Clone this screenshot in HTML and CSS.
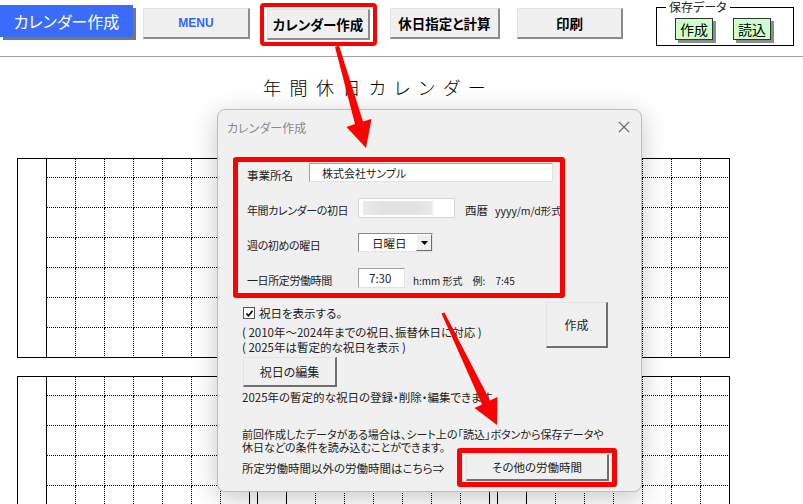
FILE: index.html
```html
<!DOCTYPE html>
<html lang="ja">
<head>
    <meta charset="UTF-8">
    <title>年間休日カレンダー</title>
    <link rel="stylesheet" href="styles.css">
</head>
<body>
    <header class="toolbar">
        <div class="brand">カレンダー作成</div>
        <button class="tool-btn menu">MENU</button>
        <div class="highlight"><button class="tool-btn">カレンダー作成</button></div>
        <button class="tool-btn wide">休日指定と計算</button>
        <button class="tool-btn print">印刷</button>
        <fieldset class="save-box">
            <legend>保存データ</legend>
            <button class="save-btn">作成</button>
            <button class="save-btn">読込</button>
        </fieldset>
    </header>

    <h1 class="sheet-title">年間休日カレンダー</h1>

    <div class="calendar" id="cal-top"></div>
    <div class="calendar next" id="cal-bottom"></div>

    <div class="dialog">
        <div class="dialog-title">
            <span>カレンダー作成</span>
            <svg class="close" width="12" height="12" viewBox="0 0 12 12"><path d="M1 1L11 11M11 1L1 11" stroke="#6b6b6b" stroke-width="1.1" fill="none"/></svg>
        </div>
        <div class="dialog-body">
            <div class="field-frame">
                <div class="field">
                    <span class="label short">事業所名</span>
                    <span class="textbox name">株式会社サンプル</span>
                </div>
                <div class="field">
                    <span class="label">年間カレンダーの初日</span>
                    <span class="textbox date"><span class="blur"></span></span>
                    <span class="hint-era">西暦</span>
                    <span class="hint">yyyy/m/d形式</span>
                </div>
                <div class="field">
                    <span class="label">週の初めの曜日</span>
                    <span class="combo">
                        <span class="combo-text">日曜日</span>
                        <span class="combo-drop"><svg width="7" height="4" viewBox="0 0 7 4"><path d="M0 0H7L3.5 4Z" fill="#000"/></svg></span>
                    </span>
                </div>
                <div class="field">
                    <span class="label">一日所定労働時間</span>
                    <span class="textbox time">7:30</span>
                    <span class="hint small">h:mm 形式　例:　7:45</span>
                </div>
            </div>

            <div class="options">
                <div class="option-col">
                    <div class="check-row">
                        <span class="check"><svg width="9" height="9" viewBox="0 0 9 9"><path d="M1.5 4.5L3.5 6.8L7.5 1.8" stroke="#000" stroke-width="1.6" fill="none"/></svg></span>
                        <span>祝日を表示する。</span>
                    </div>
                    <p class="note">( 2010年～2024年までの祝日、振替休日に対応 )<br>( 2025年は暫定的な祝日を表示 )</p>
                    <button class="dlg-btn edit">祝日の編集</button>
                    <p class="note after">2025年の暫定的な祝日の登録・削除・編集できます。</p>
                </div>
                <button class="dlg-btn create">作成</button>
            </div>

            <p class="notice">前回作成したデータがある場合は、シート上の「読込」ボタンから保存データや<br>休日などの条件を読み込むことができます。</p>

            <div class="other-row">
                <span class="other-text">所定労働時間以外の労働時間はこちら⇒</span>
                <div class="red-frame"><button class="dlg-btn other">その他の労働時間</button></div>
            </div>
        </div>
    </div>

    <svg class="arrows" width="803" height="504" viewBox="0 0 803 504">
        <polygon points="335,47 339,45.5 363,121.5 371.5,119 366,148 346.5,127 355,124" fill="#f00"/>
        <polygon points="441.5,313.5 444.5,312.5 490,400.5 497.5,397 497,425 474.5,408 482,404.5" fill="#f00"/>
    </svg>

    <script>
        // three months per row: label column + 7 day columns, header + 6 week rows
        function buildCalendar(el) {
            for (let m = 0; m < 3; m++) {
                const month = document.createElement('div');
                month.className = 'month';
                const label = document.createElement('div');
                label.className = 'month-label';
                month.appendChild(label);
                for (let r = 0; r < 7; r++) {
                    for (let c = 0; c < 7; c++) {
                        const cell = document.createElement('div');
                        cell.className = 'day';
                        if (c === 6) cell.classList.add('last-col');
                        if (r === 6) cell.classList.add('last-row');
                        month.appendChild(cell);
                    }
                }
                el.appendChild(month);
            }
        }
        buildCalendar(document.getElementById('cal-top'));
        buildCalendar(document.getElementById('cal-bottom'));
    </script>
</body>
</html>
```

FILE: styles.css
```css
* {
    box-sizing: border-box;
}

body {
    margin: 0;
    width: 803px;
    height: 504px;
    overflow: hidden;
    position: relative;
    background: #fff;
    font-family: 'Noto Sans CJK JP', 'Noto Sans', sans-serif;
    font-feature-settings: "palt";
    color: #000;
}

button {
    font-family: inherit;
    font-feature-settings: "palt";
    padding: 0;
    margin: 0;
    color: #000;
}

/* toolbar */
.toolbar {
    display: flex;
    align-items: flex-start;
    height: 57px;
    border-bottom: 1px solid #a0a0a0;
}

.brand {
    margin-top: 5px;
    width: 133px;
    height: 32px;
    line-height: 32px;
    background: #3b6cf9;
    color: #fff;
    font-size: 16px;
    text-align: center;
    box-shadow: 3px 3px 0 #777;
}

.tool-btn {
    width: 107px;
    height: 31px;
    margin: 8px 0 0 10px;
    background: #f0f0f0;
    border-style: solid;
    border-width: 1px 2px 2px 1px;
    border-color: #e2e2e2 #8c8c8c #8c8c8c #e2e2e2;
    font-size: 13.5px;
    font-weight: bold;
}

.tool-btn.menu {
    color: #3366ff;
    font-family: 'Liberation Sans', Arial, sans-serif;
    font-size: 12px;
}

.highlight {
    display: flex;
    margin: 3px 0 0 10px;
    padding: 2px 3px;
    border: 4px solid #f00;
    border-radius: 4px;
}

.highlight .tool-btn {
    width: 103px;
    margin: 0;
}

.tool-btn.wide {
    width: 110px;
    margin-left: 13px;
}

.tool-btn.print {
    width: 106px;
    margin-left: 17px;
}

.save-box {
    display: flex;
    gap: 20px;
    width: 138px;
    min-width: 0;
    margin: 1px 0 0 33px;
    padding: 5px 0 5px 18px;
    border: 1px solid #000;
}

.save-box legend {
    font-size: 12px;
    line-height: 12px;
    padding: 0 3px;
    margin-left: -9px;
    color: #222;
}

.save-btn {
    width: 38px;
    height: 22px;
    background: #ccffcc;
    border: 1px solid #333;
    box-shadow: 3px 3px 0 #8c8c8c;
    font-size: 14px;
}

/* sheet */
.sheet-title {
    margin: 20px 0 0 263px;
    height: 20px;
    font-size: 18px;
    line-height: 20px;
    font-weight: 300;
    letter-spacing: 8.5px;
}

.calendar {
    display: flex;
    gap: 7px;
    margin-top: 61px;
    padding-left: 17px;
}

.calendar.next {
    margin-top: 18px;
}

.month {
    display: grid;
    grid-template-columns: 29px repeat(7, 29px);
    grid-template-rows: 19px repeat(6, 30px);
    border-top: 1px solid #000;
    border-left: 1px solid #000;
}

.month-label {
    grid-row: 1 / span 7;
    border-right: 1px solid #000;
    border-bottom: 1px solid #000;
}

.day {
    border-right: 1px dotted #000;
    border-bottom: 1px dotted #000;
}

.day.last-col {
    border-right-style: solid;
}

.day.last-row {
    border-bottom-style: solid;
}

/* dialog */
.dialog {
    position: absolute;
    left: 217px;
    top: 109px;
    width: 425px;
    height: 383px;
    background: #f0f0f0;
    border: 1px solid #bdbdbd;
    border-radius: 8px;
    box-shadow: 0 6px 26px rgba(0, 0, 0, 0.22);
    font-size: 11px;
    color: #222;
}

.dialog-title {
    display: flex;
    justify-content: space-between;
    align-items: center;
    height: 34px;
    padding: 0 11px 0 9px;
    color: #8a8a8a;
    font-size: 12px;
}

.dialog-body {
    padding: 13px 0 0 15px;
}

.field-frame {
    width: 332px;
    height: 141px;
    padding: 2px 0 0 9px;
    border: 5px solid #f00;
    border-radius: 3px;
    overflow: hidden;
}

.field {
    display: flex;
    align-items: center;
    height: 22px;
    margin-bottom: 13px;
    white-space: nowrap;
}

.label {
    width: 111px;
    flex: none;
    font-size: 11px;
    letter-spacing: -0.4px;
}

.label.short {
    width: 62px;
    font-size: 11.5px;
    letter-spacing: 0;
}

.textbox {
    display: flex;
    align-items: center;
    height: 20px;
    margin-bottom: 5px;
    background: #fff;
    border: 1px solid;
    border-color: #a0a0a0 #e3e3e3 #e3e3e3 #a0a0a0;
    flex: none;
}

.textbox.name {
    width: 244px;
    height: 19px;
    padding-left: 12px;
}

.textbox.date {
    width: 97px;
    padding-left: 4px;
    border-color: #d6d6d6;
}

.blur {
    width: 70px;
    height: 14px;
    background: linear-gradient(90deg, #ececec 0%, #e2e2e2 25%, #e2e2e2 75%, #ececec 100%);
}

.textbox.time {
    width: 47px;
    padding-left: 10px;
    font-size: 11.5px;
}

.hint-era {
    margin-left: 10px;
    font-size: 11.5px;
}

.hint {
    margin-left: 7px;
    font-size: 10.5px;
}

.hint.small {
    margin-left: 8px;
    font-size: 10px;
}

.combo {
    display: flex;
    align-items: center;
    width: 75px;
    height: 19px;
    margin-bottom: 5px;
    background: #fff;
    border: 1px solid;
    border-color: #8c8c8c #e3e3e3 #e3e3e3 #8c8c8c;
}

.combo-text {
    flex: 1;
    padding-left: 13px;
    font-size: 11.5px;
}

.combo-drop {
    display: flex;
    align-items: center;
    justify-content: center;
    width: 16px;
    height: 17px;
    background: #f0f0f0;
    border-style: solid;
    border-width: 1px;
    border-color: #fff #6d6d6d #6d6d6d #fff;
}

.options {
    display: flex;
    align-items: flex-start;
}

.option-col {
    width: 313px;
    padding-left: 9px;
}

.check-row {
    display: flex;
    align-items: center;
    gap: 4px;
    height: 14px;
    margin-top: 8px;
    padding-left: 1px;
    font-size: 11.5px;
}

.check {
    display: flex;
    align-items: center;
    justify-content: center;
    width: 12px;
    height: 12px;
    background: #fff;
    border: 1px solid #555;
}

.note {
    margin: 5px 0 0;
    font-size: 11.5px;
    line-height: 15px;
}

.note.after {
    margin-top: 3px;
    line-height: 14px;
}

.dlg-btn {
    display: block;
    background: #f0f0f0;
    border-style: solid;
    border-width: 1px 2px 2px 1px;
    border-color: #e4e4e4 #6f6f6f #6f6f6f #e4e4e4;
    font-size: 12px;
    color: #222;
}

.dlg-btn.edit {
    width: 94px;
    height: 30px;
    margin: 2px 0 0 1px;
}

.dlg-btn.create {
    width: 62px;
    height: 46px;
    margin-top: 4px;
}

.notice {
    margin: 24px 0 0 9px;
    line-height: 13px;
}

.other-row {
    display: flex;
    align-items: center;
    margin-top: -6px;
    padding-left: 9px;
}

.other-text {
    width: 215px;
    font-size: 11.5px;
    white-space: nowrap;
}

.red-frame {
    display: flex;
    width: 160px;
    height: 39px;
    padding: 1px 3px 1px 4px;
    border: 5px solid #f00;
    border-radius: 3px;
}

.dlg-btn.other {
    width: 143px;
    height: 27px;
    font-size: 11.5px;
}

.arrows {
    position: absolute;
    left: 0;
    top: 0;
    pointer-events: none;
}
```
